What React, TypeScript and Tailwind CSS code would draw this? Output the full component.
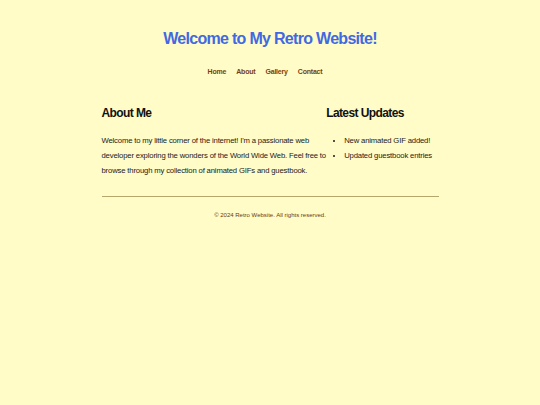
import React from 'react';

const NAV = ['Home', 'About', 'Gallery', 'Contact'];
const UPDATES = ['New animated GIF added!', 'Updated guestbook entries'];

export default function App() {
  return (
    <div
      className="min-h-[405px] w-full bg-[#fffcc8] text-[#1a1a1a]"
      style={{ fontFamily: '"Comic Sans MS", "Liberation Sans", sans-serif' }}
    >
      <header className="pt-[26px] text-center">
        <h1 className="text-[16px] font-bold leading-[26px] tracking-[-0.7px] text-[#4169e1]">
          Welcome to My Retro Website!
        </h1>
        <nav className="mt-[14px] flex justify-center text-[7px] font-bold leading-[12px] tracking-[-0.2px] text-[#7a3f0c]">
          {NAV.map((item) => (
            <a key={item} href="#" className="mr-[10px]">
              {item}
            </a>
          ))}
        </nav>
      </header>

      <main className="mx-auto mt-[25px] grid w-[337px] grid-cols-[2fr_1fr]">
        <section>
          <h2 className="text-[12px] font-bold leading-[20px] tracking-[-0.6px] text-[#111]">About Me</h2>
          <p className="mt-[10px] text-[7.7px] leading-[15px] tracking-[-0.16px] text-[#1a1a1a]">
            Welcome to my little corner of the internet! I'm a passionate web developer exploring the wonders of
            the World Wide Web. Feel free to browse through my collection of animated GIFs and guestbook.
          </p>
        </section>
        <section>
          <h2 className="text-[12px] font-bold leading-[20px] tracking-[-0.6px] text-[#111]">Latest Updates</h2>
          <ul className="mt-[10px] list-disc pl-[18px] text-[7.7px] leading-[15px] tracking-[-0.16px] text-[#1a1a1a]">
            {UPDATES.map((u) => (
              <li key={u}>{u}</li>
            ))}
          </ul>
        </section>
      </main>

      <footer className="mx-auto mt-[18px] w-[337px] border-t border-[#b5a76c] pt-[12px] text-center text-[6px] leading-[12px] text-[#6b3a10]">
        © 2024 Retro Website. All rights reserved.
      </footer>
    </div>
  );
}
